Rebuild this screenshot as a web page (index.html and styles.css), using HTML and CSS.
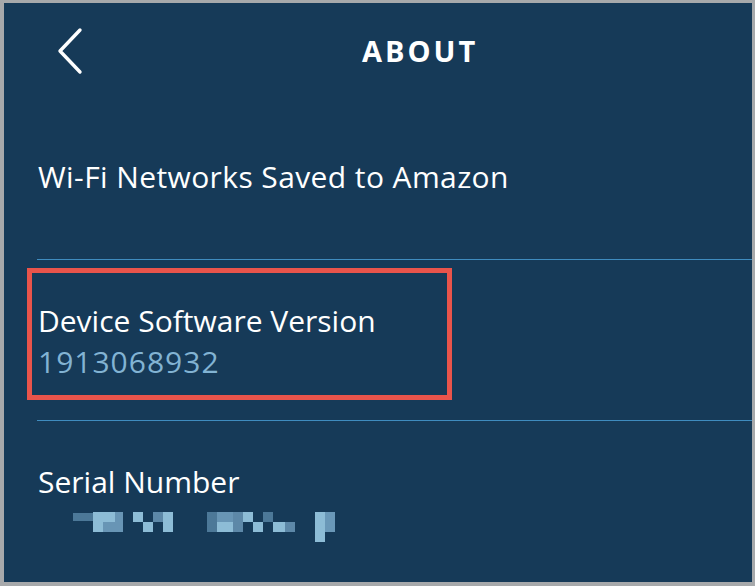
FILE: index.html
```html
<!DOCTYPE html>
<html lang="en">
<head>
  <meta charset="UTF-8" />
  <meta name="viewport" content="width=device-width, initial-scale=1.0"/>
  <title>About</title>
  <link rel="stylesheet" href="styles.css">
</head>
<body>
  <div class="screen">

    <!-- Cabecera -->
    <div class="header">
      <a href="#" class="back">
        <svg width="30" height="48" viewBox="0 0 30 48">
          <polyline points="24,3 4,24 24,45" fill="none" stroke="#fff" stroke-width="3.4" stroke-linecap="round" stroke-linejoin="round"/>
        </svg>
      </a>
      <h1>ABOUT</h1>
    </div>

    <!-- Redes Wi-Fi -->
    <div class="row row-wifi">
      <span class="label">Wi-Fi Networks Saved to Amazon</span>
    </div>
    <div class="divider"></div>

    <!-- Version -->
    <div class="row row-version">
      <div class="highlight">
        <span class="label">Device Software Version</span>
        <span class="value">1913068932</span>
      </div>
    </div>
    <div class="divider"></div>

    <!-- Numero de serie -->
    <div class="row row-serial">
      <span class="label">Serial Number</span>
      <svg class="blurred" width="264" height="32" viewBox="0 0 264 32">
        <rect x="0" y="1" width="20" height="8" fill="#4c7898"/>
        <rect x="20" y="0" width="10" height="20" fill="#8dbcd6"/>
        <rect x="30" y="0" width="12" height="10" fill="#8dbcd6"/>
        <rect x="30" y="10" width="12" height="10" fill="#6895b5"/>
        <rect x="42" y="0" width="8" height="20" fill="#6895b5"/>
        <rect x="60" y="0" width="10" height="10" fill="#8dbcd6"/>
        <rect x="70" y="10" width="10" height="10" fill="#8dbcd6"/>
        <rect x="80" y="0" width="10" height="10" fill="#5d88a8"/>
        <rect x="90" y="0" width="10" height="20" fill="#8dbcd6"/>
        <rect x="134" y="0" width="10" height="20" fill="#4c7898"/>
        <rect x="144" y="0" width="16" height="10" fill="#6895b5"/>
        <rect x="144" y="10" width="16" height="10" fill="#8dbcd6"/>
        <rect x="160" y="0" width="10" height="20" fill="#5d88a8"/>
        <rect x="170" y="0" width="10" height="10" fill="#8dbcd6"/>
        <rect x="180" y="10" width="10" height="10" fill="#8dbcd6"/>
        <rect x="190" y="0" width="10" height="10" fill="#4c7898"/>
        <rect x="200" y="10" width="12" height="10" fill="#8dbcd6"/>
        <rect x="212" y="10" width="10" height="10" fill="#5d88a8"/>
        <rect x="242" y="0" width="10" height="30" fill="#8dbcd6"/>
        <rect x="252" y="0" width="10" height="20" fill="#6a98b8"/>
      </svg>
    </div>

  </div>
</body>
</html>
```

FILE: styles.css
```css
body {
  margin: 0;
  background-color: #a7a9ab;
  font-family: "Open Sans", Arial, sans-serif;
  color: #fff;
}

.screen {
  margin: 3px 3px 0 4px;
  height: 579px;
  background-color: #163a58;
  display: flex;
  flex-direction: column;
  overflow: hidden;
}

/* Cabecera */
.header {
  height: 97px;
  flex-shrink: 0;
  display: flex;
  align-items: center;
}

.back {
  display: flex;
  margin-left: 52px;
  margin-top: -2px;
}

.header h1 {
  margin: -2px 0 0 276px;
  font-size: 29px;
  font-weight: bold;
  letter-spacing: 3px;
}

/* Filas */
.row {
  padding-left: 34px;
  box-sizing: border-box;
  flex-shrink: 0;
}

.label {
  display: block;
  font-size: 30px;
  line-height: 38px;
}

.row-wifi {
  height: 159px;
  padding-top: 58px;
}

.row-wifi .label {
  letter-spacing: 0.4px;
}

.divider {
  height: 1px;
  flex-shrink: 0;
  margin-left: 33px;
  background-color: #3f8cbf;
}

.row-version {
  height: 160px;
  padding-left: 23px;
  padding-top: 8px;
}

.highlight {
  width: 425px;
  height: 132px;
  border: 5px solid #e9544b;
  padding: 29px 0 0 6px;
  box-sizing: border-box;
}

.value {
  display: block;
  margin-top: 3px;
  font-size: 30px;
  line-height: 38px;
  letter-spacing: 1px;
  color: #82b3d3;
}

.row-serial {
  padding-top: 42px;
}

.blurred {
  display: block;
  margin: 11px 0 0 35px;
}
```
